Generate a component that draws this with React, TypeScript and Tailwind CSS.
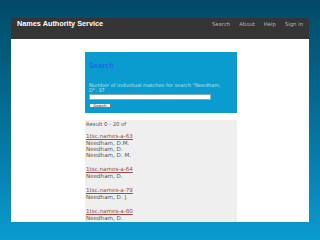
import React from 'react';

const entries = [
  { id: '1tsc.names-a-63', names: ['Needham, D.M.', 'Needham, D.', 'Needham, D. M.'] },
  { id: '1tsc.names-a-64', names: ['Needham, D.'] },
  { id: '1tsc.names-a-79', names: ['Needham, D. J.'] },
  { id: '1tsc.names-a-80', names: ['Needham, D.'] },
];

export default function App() {
  return (
    <div className="w-[320px] h-[240px] overflow-hidden bg-gradient-to-b from-[#024a66] via-[#05709a] to-[#0a9bd0] pt-[18px] px-[11px] font-['DejaVu_Sans',sans-serif]">
      {/* Top bar */}
      <div className="h-[21px] bg-[#353535] flex items-start justify-between pl-[6px] pr-[6px] pt-[1px]">
        <span className="font-['Liberation_Sans',sans-serif] font-bold text-[7.3px] leading-[9px] text-white">
          Names Authority Service
        </span>
        <nav className="flex gap-[9px] pt-[1px] text-[5.3px] leading-[8px] text-[#b5b5b5]">
          <span>Search</span>
          <span>About</span>
          <span>Help</span>
          <span>Sign in</span>
        </nav>
      </div>

      {/* Page body */}
      <div className="h-[183px] bg-white overflow-hidden pl-[74px] pt-[13px]">
        <div className="w-[152px]">
          {/* Search box */}
          <div className="h-[61px] bg-[#0a9ccf] px-[4px] pt-[10px]">
            <div className="text-[7.2px] leading-[8px] text-[#2a4dff]">Search</div>
            <p className="mt-[13px] text-[5px] leading-[5px] text-[#b9e4f3]">
              Number of individual matches for search "Needham,
              <br />
              D": 37
            </p>
            <div className="mt-[1px] w-[122px] h-[6px] bg-white border border-[#8aa]" />
            <div className="mt-[3px] w-[22px] h-[5px] bg-[#eeeeee] border border-[#777] flex items-center justify-center text-[3.8px] leading-[4px] text-[#333]">
              Search
            </div>
          </div>

          {/* Results */}
          <div className="mt-[7px] bg-[#efefef] pl-[1px] pt-[1px] text-[5.6px] leading-[6px] text-[#555] h-[120px]">
            <div className="text-[5.3px]">Result 0 - 20 of</div>
            <div className="mt-[6px] flex flex-col gap-[8px]">
              {entries.map((e) => (
                <div key={e.id}>
                  <div className="leading-[7px] text-[#9a4a4a] underline">{e.id}</div>
                  {e.names.map((n, i) => (
                    <div key={i}>{n}</div>
                  ))}
                </div>
              ))}
            </div>
          </div>
        </div>
      </div>
    </div>
  );
}
